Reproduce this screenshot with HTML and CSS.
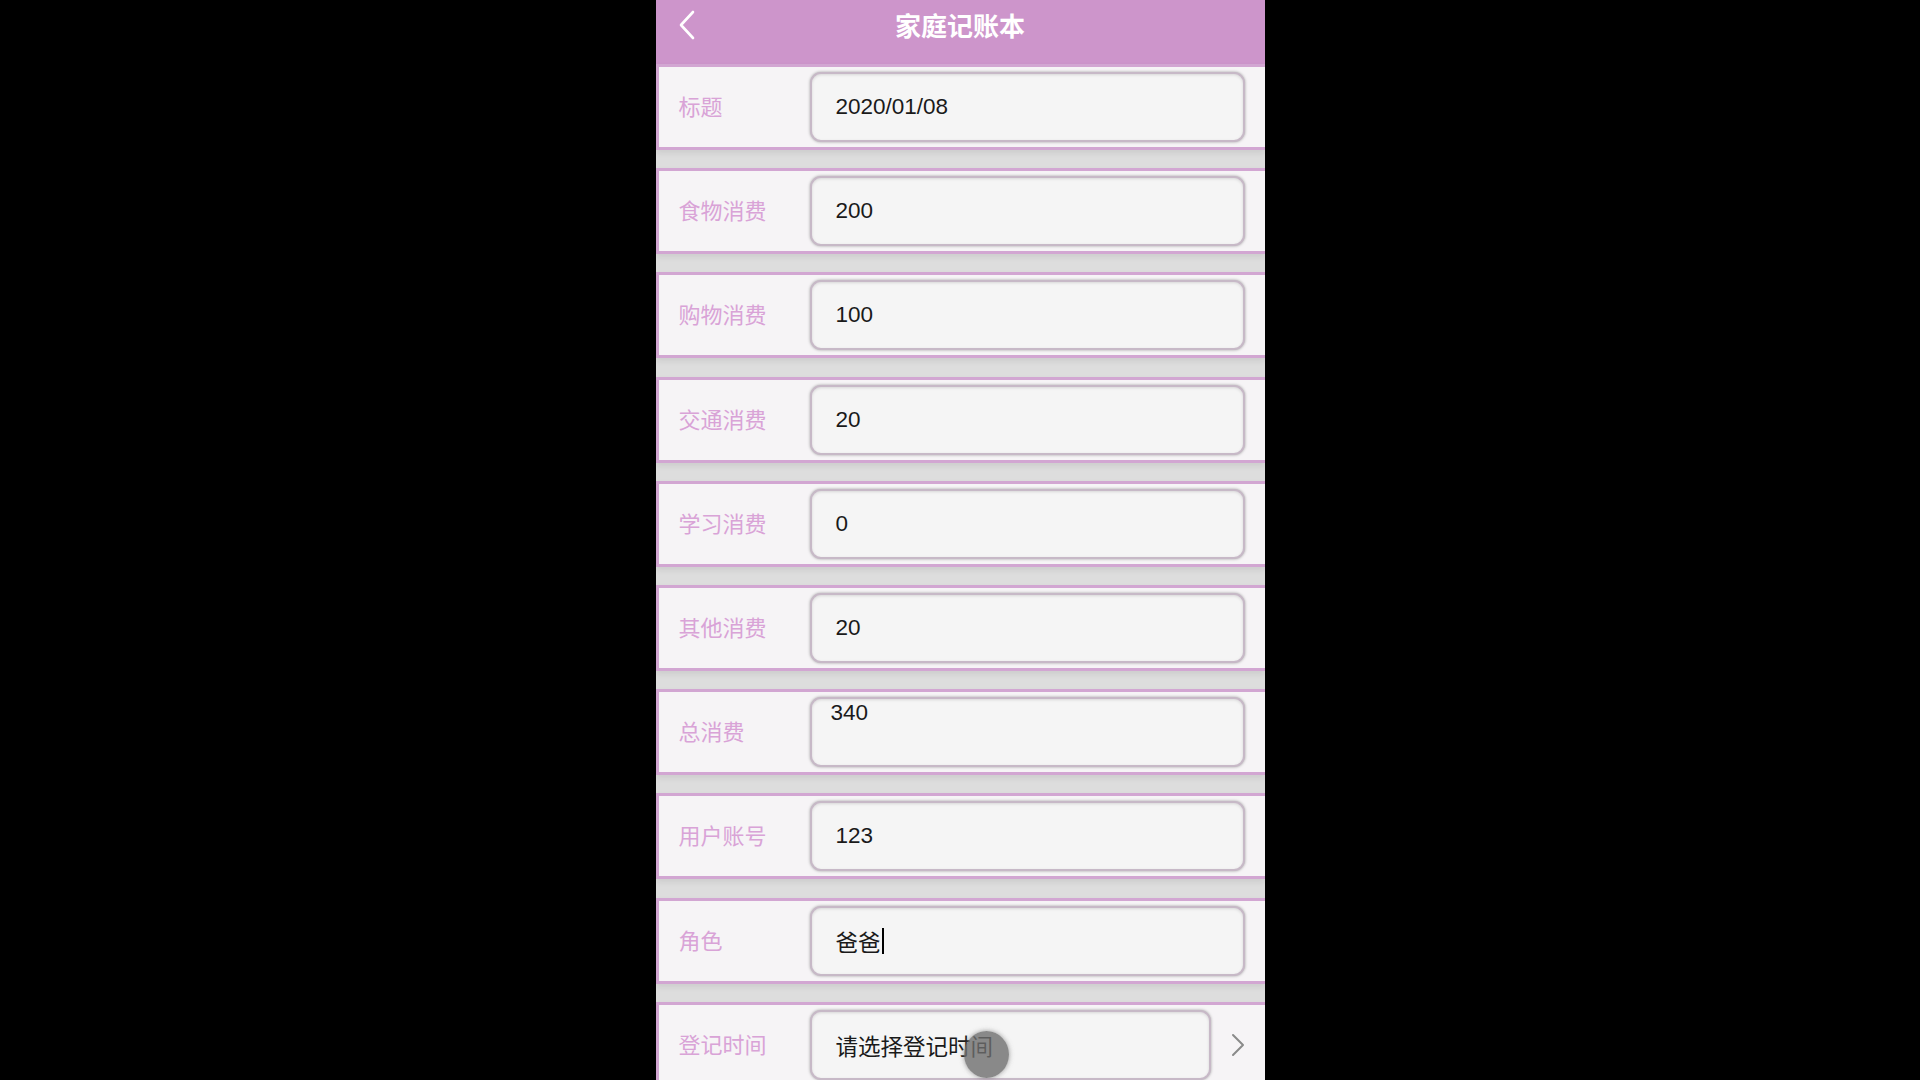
FILE: index.html
```html
<!DOCTYPE html>
<html lang="zh-CN">
<head>
<meta charset="utf-8">
<title>家庭记账本</title>
<link rel="stylesheet" href="styles.css">
</head>
<body>
<div class="phone">
  <header class="topbar">
    <svg class="back" width="18" height="30" viewBox="0 0 18 30"><path d="M15 2 L3 15 L15 28" fill="none" stroke="#fff" stroke-width="2.6" stroke-linecap="round" stroke-linejoin="round"/></svg>
    <h1 class="title">家庭记账本</h1>
  </header>
  <main class="form">
    <div class="row"><span class="label">标题</span><div class="field">2020/01/08</div></div>
    <div class="row"><span class="label">食物消费</span><div class="field">200</div></div>
    <div class="row"><span class="label">购物消费</span><div class="field">100</div></div>
    <div class="row"><span class="label">交通消费</span><div class="field">20</div></div>
    <div class="row"><span class="label">学习消费</span><div class="field">0</div></div>
    <div class="row"><span class="label">其他消费</span><div class="field">20</div></div>
    <div class="row"><span class="label">总消费</span><div class="field area">340</div></div>
    <div class="row"><span class="label">用户账号</span><div class="field">123</div></div>
    <div class="row"><span class="label">角色</span><div class="field">爸爸<span class="caret"></span></div></div>
    <div class="row picker"><span class="label">登记时间</span><div class="field">请选择登记时间</div>
      <svg class="chev" width="14" height="24" viewBox="0 0 14 24"><path d="M2 2 L12 12 L2 22" fill="none" stroke="#8a8a8a" stroke-width="2" stroke-linecap="round" stroke-linejoin="round"/></svg>
      <span class="touch"></span>
    </div>
  </main>
</div>
</body>
</html>
```
FILE: styles.css
```css
html, body {
  margin: 0;
  padding: 0;
  background: #000;
  height: 100%;
  overflow: hidden;
}
body {
  font-family: "Liberation Sans", "Noto Sans CJK SC", sans-serif;
}
.phone {
  width: 609px;
  height: 1080px;
  margin: 0 auto;
  background: #dddddd;
  overflow: hidden;
}
.topbar {
  height: 64px;
  background: #cd95cb;
  display: flex;
  align-items: flex-start;
  justify-content: center;
  position: relative;
}
.back {
  position: absolute;
  left: 22px;
  top: 10px;
}
.title {
  margin: 0;
  padding-top: 8px;
  font-family: "Noto Sans CJK SC", sans-serif;
  font-weight: 700;
  font-size: 26px;
  line-height: 34px;
  color: #fff;
}
.form {
  display: flex;
  flex-direction: column;
}
.row {
  height: 86px;
  box-sizing: border-box;
  margin-bottom: 18.2px;
  background: #f6f4f6;
  border: 3px solid #d2a6d2;
  border-right: none;
  display: grid;
  grid-template-columns: 151px 435px;
  align-items: center;
  box-shadow: 0 3px 6px rgba(0, 0, 0, 0.08);
  position: relative;
}
.label {
  padding-left: 20px;
  padding-bottom: 4px;
  font-family: "Noto Sans CJK SC", sans-serif;
  font-size: 22px;
  color: #d9a3d7;
}
.field {
  height: 70px;
  box-sizing: border-box;
  border: 2px solid #c7b9c7;
  border-radius: 11px;
  background: #f5f5f5;
  box-shadow: 0 0 3px rgba(0, 0, 0, 0.35), inset 0 1px 3px rgba(0, 0, 0, 0.12);
  padding-left: 24px;
  display: flex;
  align-items: center;
  font-size: 22.5px;
  color: #1a1a1a;
}
.field.area {
  align-items: flex-start;
  padding-left: 19px;
  padding-top: 0;
  line-height: 28px;
}
.caret {
  display: inline-block;
  width: 2px;
  height: 26px;
  background: #000;
  margin-left: 1px;
}
.row.picker {
  grid-template-columns: 151px 401px 1fr;
}
.chev {
  justify-self: center;
}
.touch {
  position: absolute;
  left: 305px;
  top: 26px;
  width: 45px;
  height: 47px;
  border-radius: 50%;
  background: rgba(110, 110, 110, 0.8);
  box-shadow: 0 0 5px rgba(110, 110, 110, 0.7);
}
```
